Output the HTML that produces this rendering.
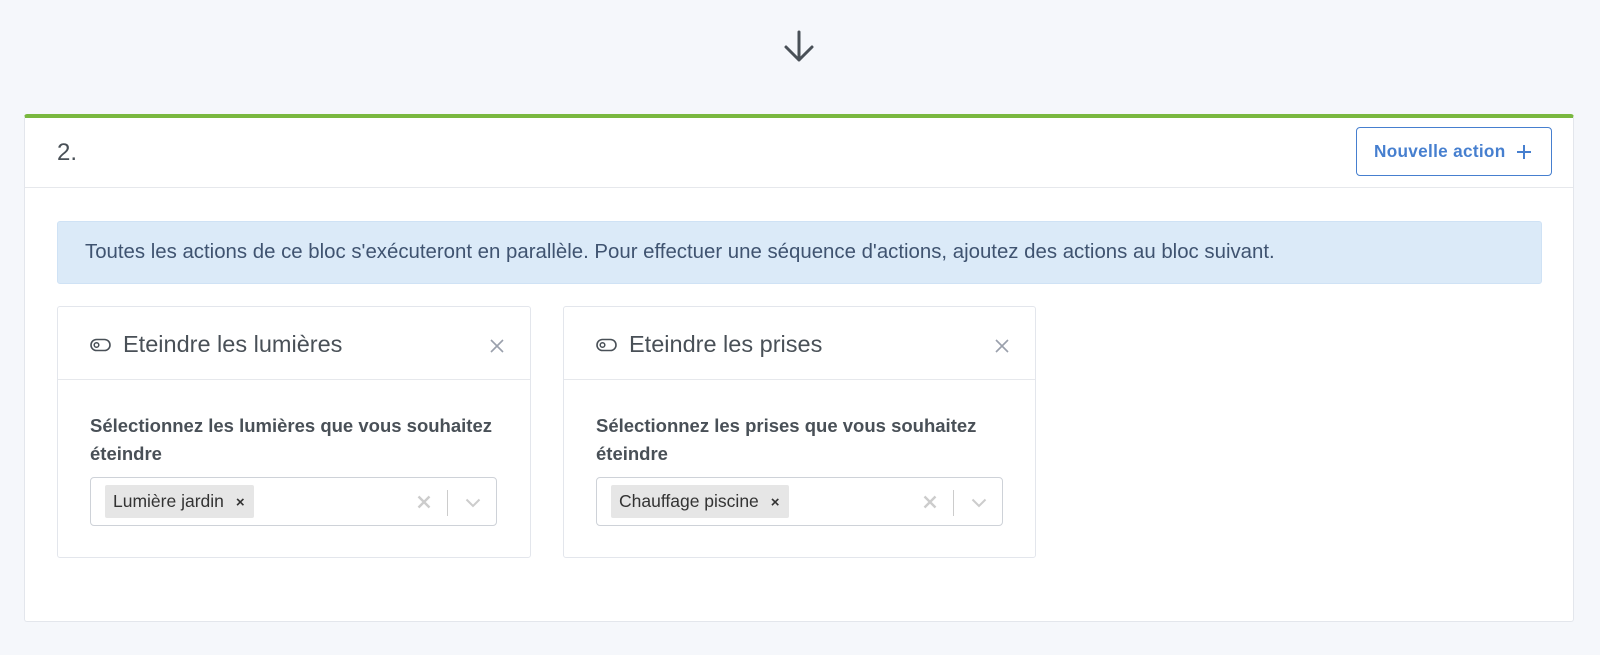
<!DOCTYPE html>
<html><head><meta charset="utf-8"><style>
*{box-sizing:border-box;margin:0;padding:0}
body{width:1600px;height:655px;background:#f5f7fb;font-family:"Liberation Sans",sans-serif;color:#495057;position:relative;overflow:hidden}
.abs{position:absolute}
.card{position:absolute;left:24px;top:114px;width:1550px;height:508px;background:#fff;border:1px solid #e3e6ec;border-top:4px solid #79b83f;border-radius:3px}
.hdr{position:absolute;left:0;top:0;width:100%;height:70px;border-bottom:1px solid #e6e8ec}
.num{position:absolute;left:32px;top:21px;font-size:24px;color:#495057}
.btn{position:absolute;left:1331px;top:9px;width:196px;height:49px;border:1.5px solid #467fcf;border-radius:4px;color:#467fcf;font-size:17.2px;font-weight:bold;line-height:46px;padding-left:17px;letter-spacing:0.3px}
.btn svg{position:absolute;right:19px;top:16px}
.alert{position:absolute;left:32px;top:103px;width:1485px;height:63px;background:#dbeaf8;border:1px solid #cfe2f5;border-radius:3px;color:#3f5370;font-size:20.4px;line-height:61px;padding-left:27px}
.ac{position:absolute;top:188px;width:474px;height:252px;border:1px solid #e3e6ec;border-radius:3px;background:#fff}
.ach{height:73px;border-bottom:1px solid #e6e8ec;position:relative}
.ach .t{position:absolute;left:65px;top:24px;font-size:23.5px;color:#495057}
.ach svg.i{position:absolute;left:32px;top:31px}
.ach .x{position:absolute;right:26px;top:32px}
.lbl{position:absolute;left:32px;top:105px;font-size:18.5px;font-weight:bold;line-height:28px;color:#495057}
.sel{position:absolute;left:32px;top:170px;width:407px;height:49px;border:1px solid #ced2d8;border-radius:4px}
.tag{position:absolute;left:14px;top:7px;height:33px;background:#e6e6e6;border-radius:2px;font-size:17.5px;line-height:33px;padding-left:8px;color:#333}
.tag b{font-size:15px;margin-left:12px;margin-right:9px}
.sep{position:absolute;right:48px;top:12px;width:1px;height:26px;background:#ccc}
</style></head><body>
<svg class="abs" style="left:781px;top:29px" width="36" height="36" viewBox="0 0 36 36"><path d="M18 3V31M5 18L18 31L31 18" fill="none" stroke="#495057" stroke-width="3" stroke-linecap="round" stroke-linejoin="round"/></svg>
<div class="card">
 <div class="hdr"><div class="num">2.</div><div class="btn">Nouvelle action<svg width="16" height="16"><path d="M8 1V15M1 8H15" stroke="#467fcf" stroke-width="2"/></svg></div></div>
 <div class="alert">Toutes les actions de ce bloc s'exécuteront en parallèle. Pour effectuer une séquence d'actions, ajoutez des actions au bloc suivant.</div>
 <div class="ac" style="left:32px">
  <div class="ach"><svg class="i" width="21" height="14" viewBox="0 0 21 14"><rect x="1" y="1.5" width="19" height="11" rx="5.5" fill="none" stroke="#495057" stroke-width="1.6"/><circle cx="6.5" cy="7" r="2.3" fill="none" stroke="#495057" stroke-width="1.5"/></svg><div class="t">Eteindre les lumières</div>
  <svg class="x" width="14" height="14"><path d="M1 1L13 13M13 1L1 13" stroke="#9aa0ac" stroke-width="1.6"/></svg></div>
  <div class="lbl">Sélectionnez les lumières que vous souhaitez<br>éteindre</div>
  <div class="sel"><div class="tag">Lumière jardin<b>×</b></div>
   <svg class="abs" style="right:65px;top:17px" width="14" height="14"><path d="M1.5 1.5L12.5 12.5M12.5 1.5L1.5 12.5" stroke="#ccc" stroke-width="2.4"/></svg>
   <div class="sep"></div>
   <svg class="abs" style="right:15px;top:20px" width="16" height="10"><path d="M1.5 1.5L8 8L14.5 1.5" fill="none" stroke="#ccc" stroke-width="2"/></svg></div>
 </div>
 <div class="ac" style="left:538px;width:473px">
  <div class="ach"><svg class="i" width="21" height="14" viewBox="0 0 21 14"><rect x="1" y="1.5" width="19" height="11" rx="5.5" fill="none" stroke="#495057" stroke-width="1.6"/><circle cx="6.5" cy="7" r="2.3" fill="none" stroke="#495057" stroke-width="1.5"/></svg><div class="t">Eteindre les prises</div>
  <svg class="x" width="14" height="14"><path d="M1 1L13 13M13 1L1 13" stroke="#9aa0ac" stroke-width="1.6"/></svg></div>
  <div class="lbl">Sélectionnez les prises que vous souhaitez<br>éteindre</div>
  <div class="sel"><div class="tag">Chauffage piscine<b>×</b></div>
   <svg class="abs" style="right:65px;top:17px" width="14" height="14"><path d="M1.5 1.5L12.5 12.5M12.5 1.5L1.5 12.5" stroke="#ccc" stroke-width="2.4"/></svg>
   <div class="sep"></div>
   <svg class="abs" style="right:15px;top:20px" width="16" height="10"><path d="M1.5 1.5L8 8L14.5 1.5" fill="none" stroke="#ccc" stroke-width="2"/></svg></div>
 </div>
</div>
</body></html>
